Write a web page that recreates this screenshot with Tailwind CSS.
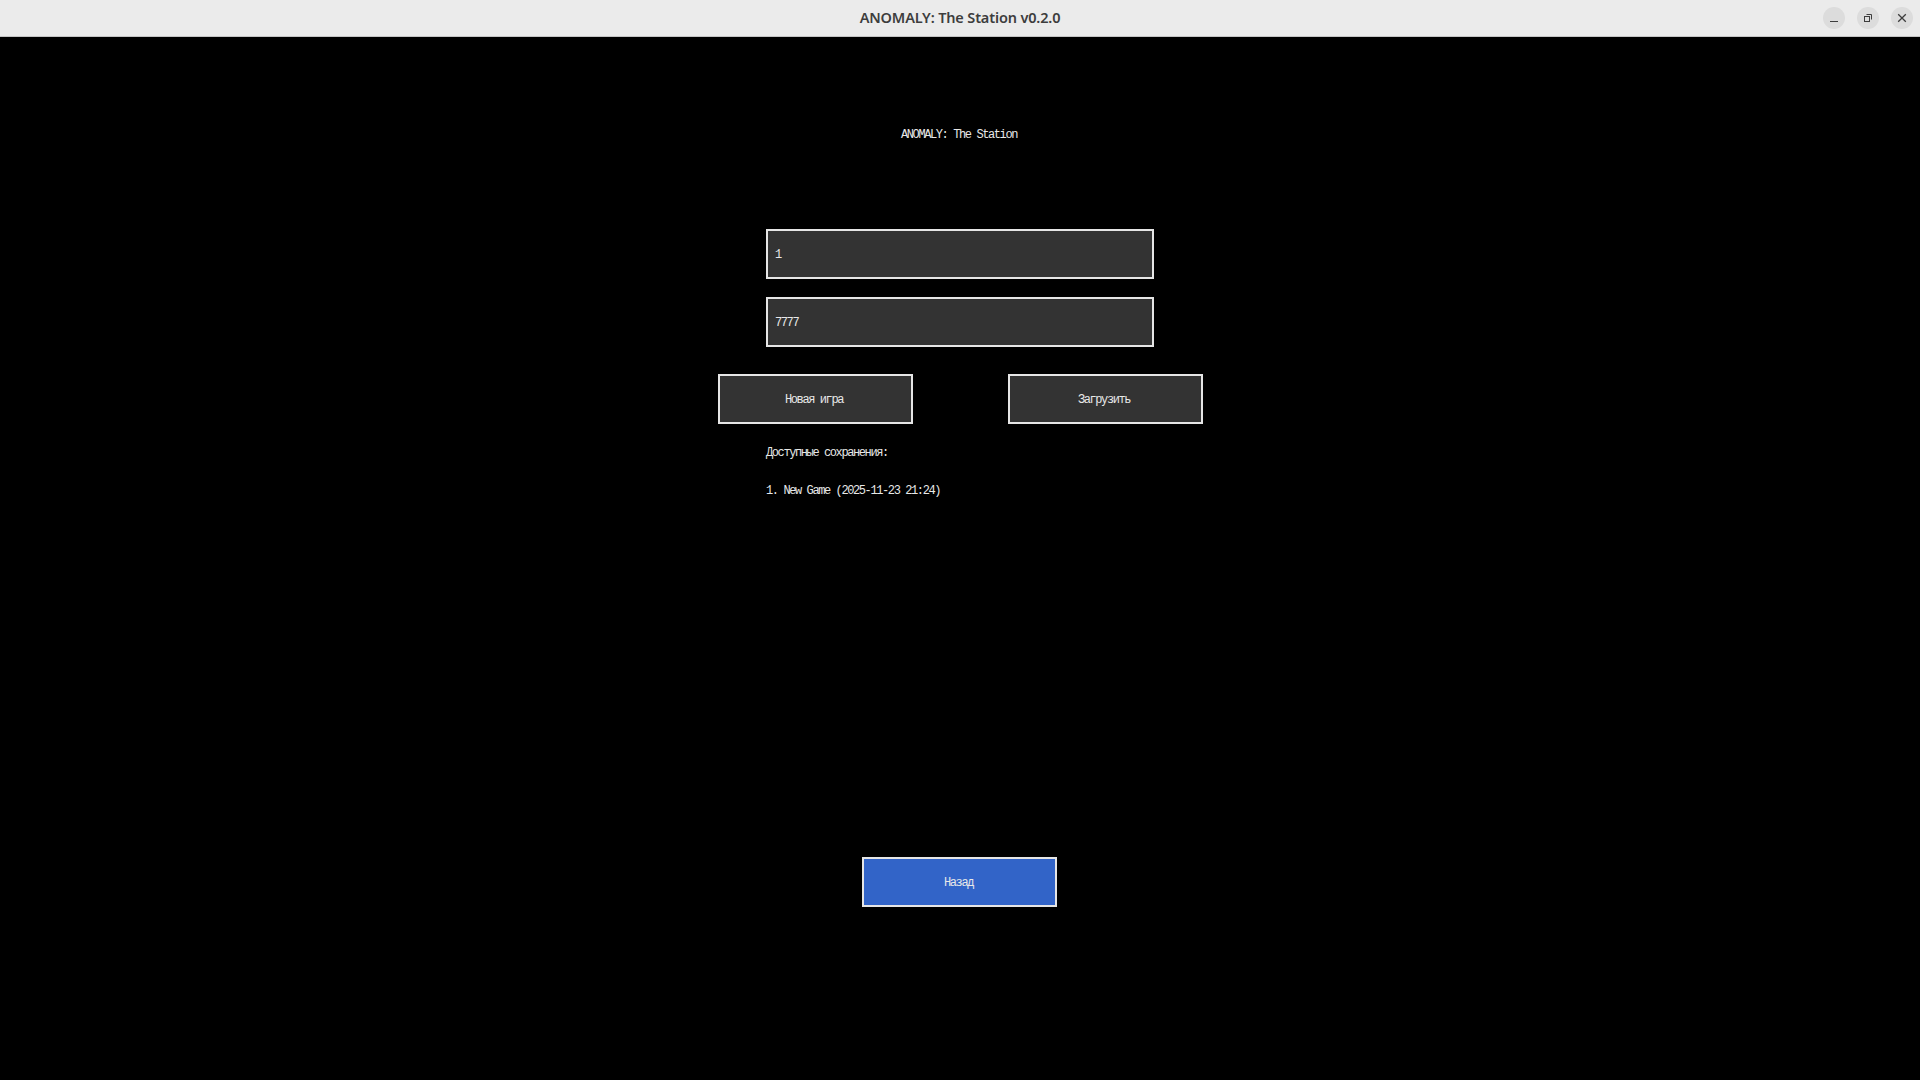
<!doctype html>
<html>
  <head>
    <title>ANOMALY: The Station v0.2.0</title>
    <script src="https://cdn.jsdelivr.net/npm/@tailwindcss/browser@4"></script>
  </head>

  <body class="bg-black h-screen overflow-hidden">
    <!-- Window title bar -->
    <header class="relative flex items-center justify-center h-[37px] pb-px bg-[#ebebeb] border-b border-[#c4c4c4]">
      <p class="font-['Noto_Sans',sans-serif] text-[14.5px] tracking-[-0.15px] font-semibold text-[#3d3d3d]">ANOMALY: The Station v0.2.0</p>
      <div class="absolute right-[7px] top-[7px] flex gap-[12px]">
        <div class="flex items-center justify-center w-[22px] h-[22px] rounded-full bg-[#dcdcdc]">
          <svg width="10" height="10" viewBox="0 0 10 10"><path d="M1 8.5H9" stroke="#3d3d3d" stroke-width="1"/></svg>
        </div>
        <div class="flex items-center justify-center w-[22px] h-[22px] rounded-full bg-[#dcdcdc]">
          <svg width="10" height="10" viewBox="0 0 10 10" fill="none" stroke="#3d3d3d" stroke-width="1"><rect x="1.5" y="3.5" width="5" height="5"/><path d="M3.5 1.5H8.5V6.5"/></svg>
        </div>
        <div class="flex items-center justify-center w-[22px] h-[22px] rounded-full bg-[#dcdcdc]">
          <svg width="10" height="10" viewBox="0 0 10 10" fill="none" stroke="#3d3d3d" stroke-width="1.3"><path d="M1.2 1.2L8.8 8.8M8.8 1.2L1.2 8.8"/></svg>
        </div>
      </div>
    </header>

    <!-- Game menu -->
    <main class="flex flex-col items-center font-['Liberation_Mono',monospace] text-[12px] tracking-[-1.4px] text-[#e8e8e8]">
      <h1 class="mt-[90px] h-4 leading-4 pr-[2px]">ANOMALY: The Station</h1>

      <div class="mt-[86px] flex items-center w-[388px] h-[50px] pl-[7px] pt-px bg-[#333333] border-2 border-[#e6e6e6]">1</div>
      <div class="mt-[18px] flex items-center w-[388px] h-[50px] pl-[7px] pt-px bg-[#333333] border-2 border-[#e6e6e6]">7777</div>

      <div class="mt-[27px] flex justify-between w-[485px]">
        <button class="w-[195px] h-[50px] pt-px pr-[2px] bg-[#333333] border-2 border-[#e6e6e6]">Новая игра</button>
        <button class="w-[195px] h-[50px] pt-px pr-[2px] bg-[#333333] border-2 border-[#e6e6e6]">Загрузить</button>
      </div>

      <div class="mt-[21px] w-[388px]">
        <p class="h-4 leading-4">Доступные сохранения:</p>
        <p class="mt-[22px] h-4 leading-4">1. New Game (2025-11-23 21:24)</p>
      </div>

      <button class="mt-[358px] mr-px w-[195px] h-[50px] pt-px pr-[2px] bg-[#3264c8] border-2 border-[#e6e6e6]">Назад</button>
    </main>
  </body>
</html>
